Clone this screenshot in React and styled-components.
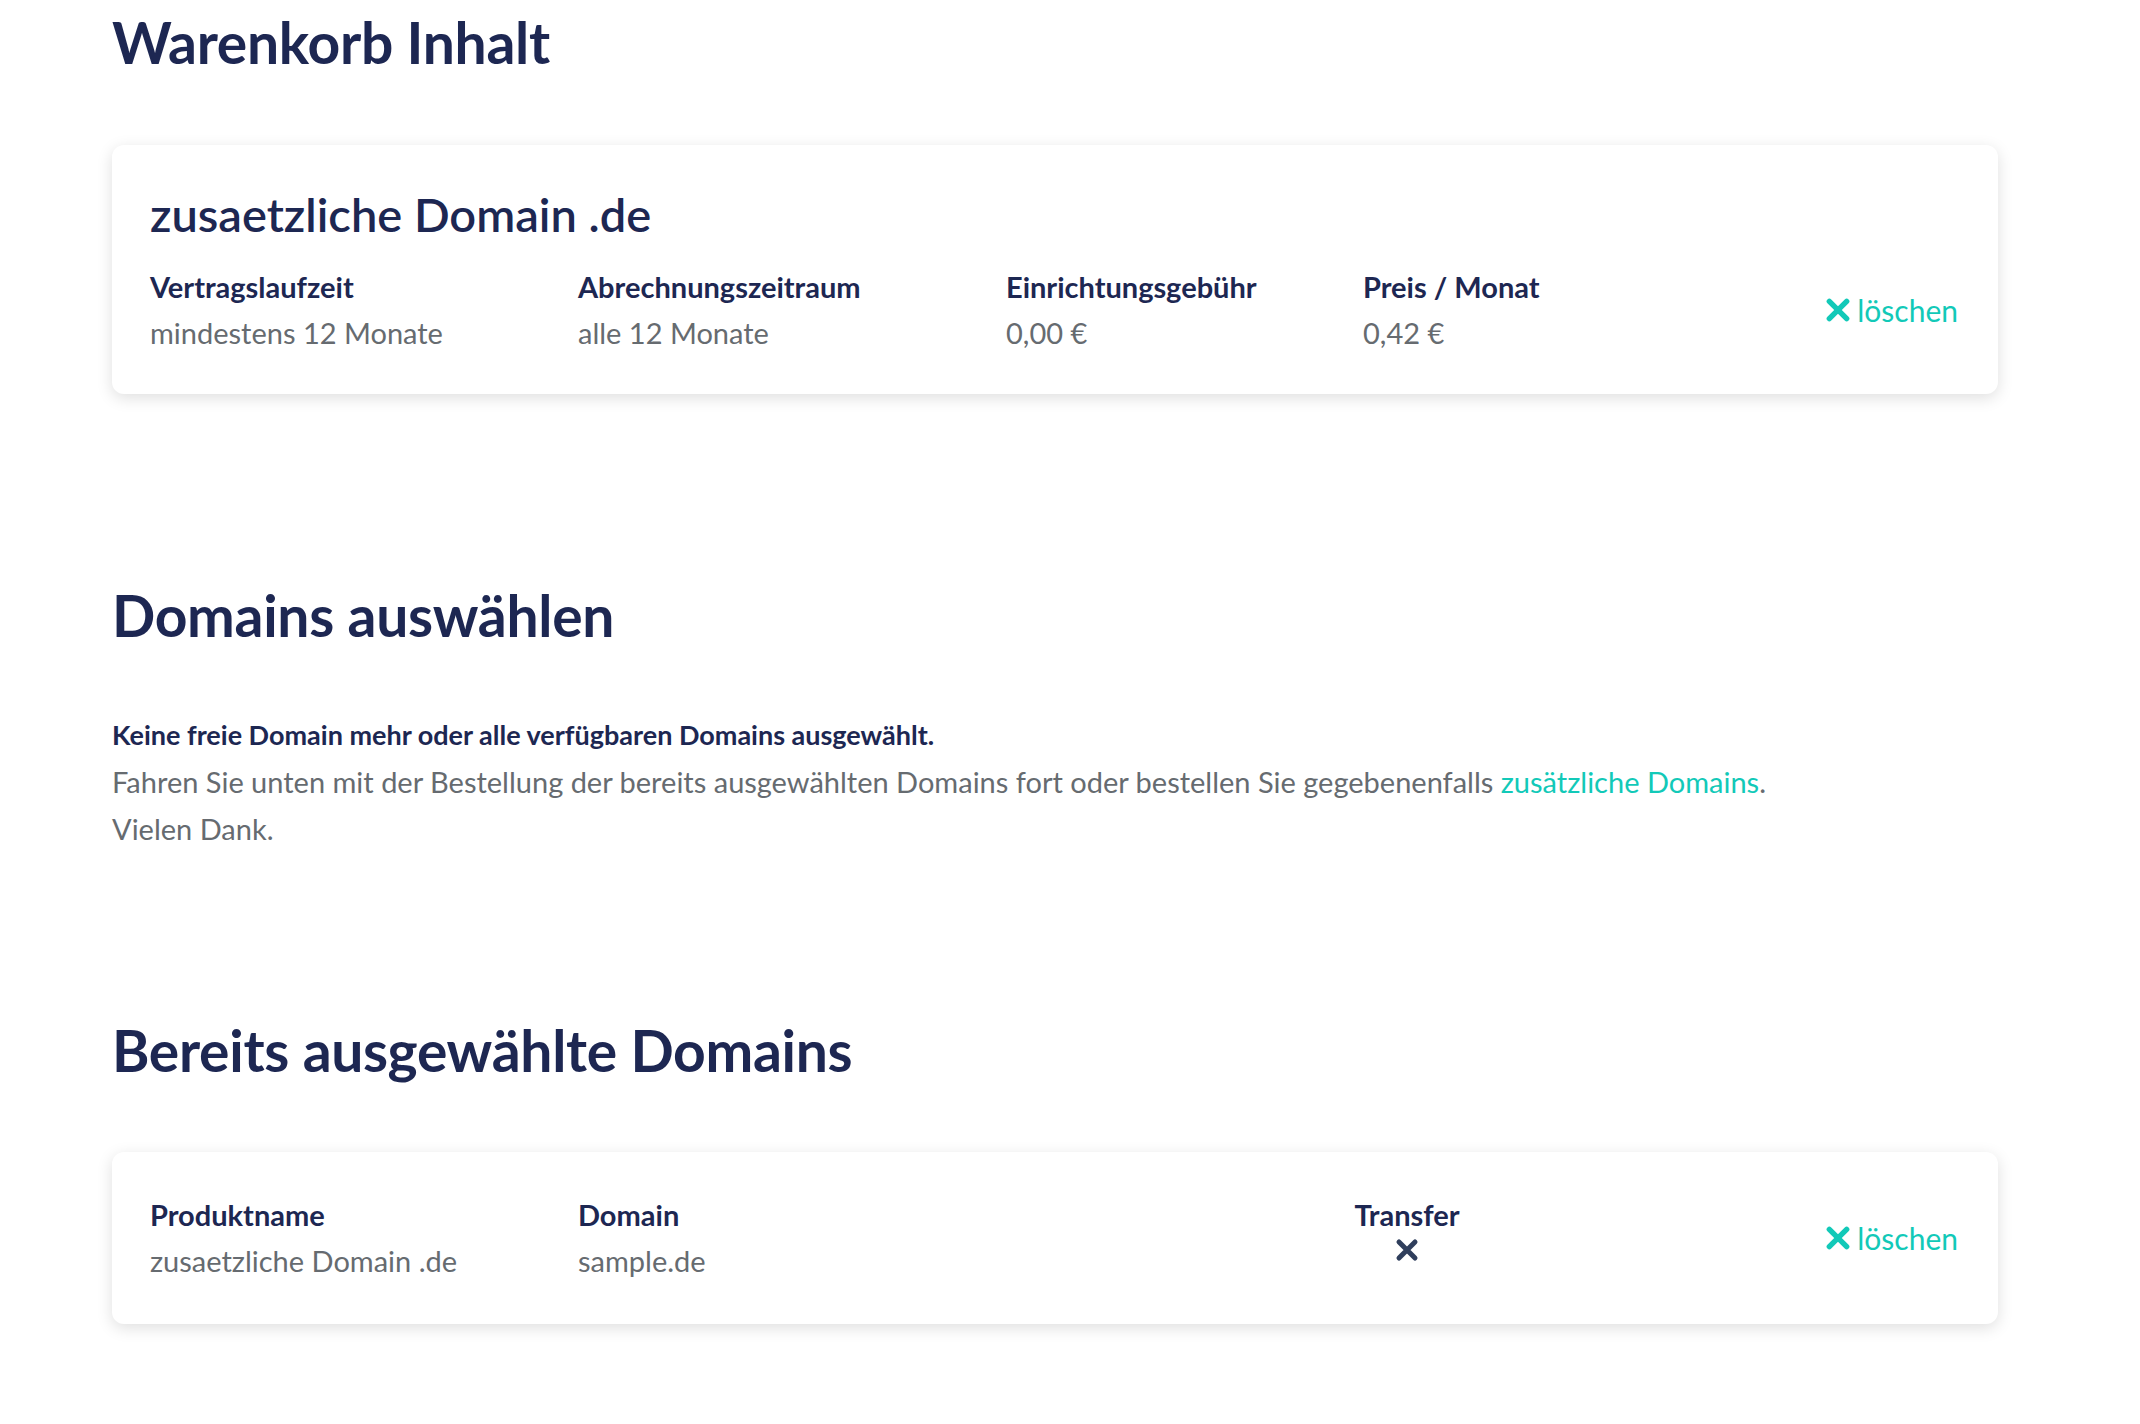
import React from 'react';
import styled, { createGlobalStyle } from 'styled-components';

const Global = createGlobalStyle`
  body { margin: 0; background: #fff; font-family: Lato, "Open Sans", sans-serif; }
`;

const navy = '#1d2752';
const grey = '#666b70';
const teal = '#12c9b8';

const Page = styled.div`
  padding: 0 0 80px 112px;
  width: 1886px;
`;

const H1 = styled.h1`
  margin: 0;
  font-size: 57px;
  font-weight: 700;
  color: ${navy};
  line-height: 80px;
  padding-top: ${p => p.$top}px;
  letter-spacing: -0.3px;
`;

const Card = styled.div`
  margin-top: ${p => p.$top}px;
  border-radius: 12px;
  box-shadow: 0 4px 16px rgba(0, 0, 0, 0.13);
  padding: ${p => p.$pad};
  display: flex;
  flex-direction: column;
`;

const CardTitle = styled.div`
  font-size: 47px;
  font-weight: 600;
  color: ${navy};
  line-height: 56px;
  margin-bottom: 22px;
`;

const Row = styled.div`
  display: flex;
  align-items: center;
`;

const Col = styled.div`
  width: ${p => p.$w}px;
  flex-shrink: 0;
  display: flex;
  flex-direction: column;
  align-self: flex-start;
  align-items: ${p => (p.$center ? 'center' : 'flex-start')};
`;

const Label = styled.div`
  font-size: 29px;
  font-weight: 700;
  color: ${navy};
  line-height: 46px;
`;

const Value = styled.div`
  font-size: 29px;
  color: ${grey};
  line-height: 46px;
`;

const Delete = styled.a`
  margin-left: auto;
  display: flex;
  align-items: center;
  gap: 6px;
  color: ${teal};
  font-size: 30px;
  cursor: pointer;
`;

const Bold = styled.div`
  margin-top: 56px;
  font-size: 27px;
  font-weight: 700;
  color: ${navy};
  line-height: 47px;
`;

const Text = styled.div`
  font-size: 29px;
  color: ${grey};
  line-height: 47px;
`;

const Link = styled.span`
  color: ${teal};
`;

const X = ({ color, size = 26 }) => (
  <svg width={size} height={size} viewBox="0 0 24 24">
    <path d="M4 4L20 20M20 4L4 20" stroke={color} strokeWidth="5" strokeLinecap="round" />
  </svg>
);

export default function App() {
  return (
    <Page>
      <Global />
      <H1 $top={2}>Warenkorb Inhalt</H1>
      <Card $top={63} $pad="41px 40px 38px 38px">
        <CardTitle>zusaetzliche Domain .de</CardTitle>
        <Row>
          <Col $w={428}><Label>Vertragslaufzeit</Label><Value>mindestens 12 Monate</Value></Col>
          <Col $w={428}><Label>Abrechnungszeitraum</Label><Value>alle 12 Monate</Value></Col>
          <Col $w={357}><Label>Einrichtungsgebühr</Label><Value>0,00 €</Value></Col>
          <Col $w={300}><Label>Preis / Monat</Label><Value>0,42 €</Value></Col>
          <Delete><X color={teal} />löschen</Delete>
        </Row>
      </Card>
      <H1 $top={181}>Domains auswählen</H1>
      <Bold>Keine freie Domain mehr oder alle verfügbaren Domains ausgewählt.</Bold>
      <Text>
        Fahren Sie unten mit der Bestellung der bereits ausgewählten Domains fort oder bestellen Sie gegebenenfalls <Link>zusätzliche Domains</Link>.
      </Text>
      <Text>Vielen Dank.</Text>
      <H1 $top={158}>Bereits ausgewählte Domains</H1>
      <Card $top={62} $pad="40px 40px 40px 38px">
        <Row>
          <Col $w={428}><Label>Produktname</Label><Value>zusaetzliche Domain .de</Value></Col>
          <Col $w={772}><Label>Domain</Label><Value>sample.de</Value></Col>
          <Col $w={114} $center><Label>Transfer</Label><X color="#2f3e5c" size={24} /></Col>
          <Delete><X color={teal} />löschen</Delete>
        </Row>
      </Card>
    </Page>
  );
}
